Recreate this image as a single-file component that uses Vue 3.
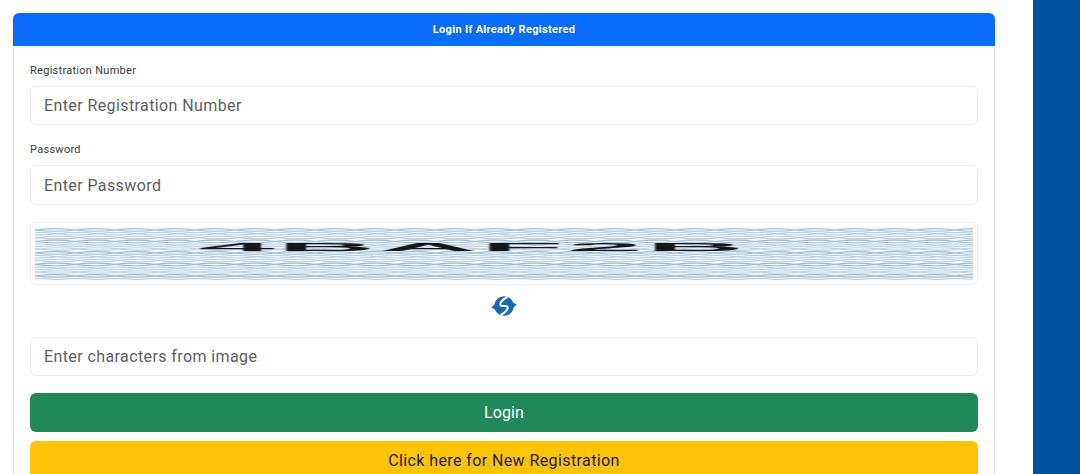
<script setup>
const rows = []
for (let i = 0; i < 14; i++) {
  const y = 3 + i * 3.9
  const up = i % 2 ? 1 : -1
  const start = -80 + (i % 3) * 22
  let a = `M${start} ${y}`
  let b = `M${start} ${y}`
  for (let x = start; x < 960; x += 80) {
    a += ` q20 ${up * 2.6} 40 0 t40 0`
    b += ` q20 ${-up * 2.6} 40 0 t40 0`
  }
  rows.push({ a, b, color: i % 3 === 0 ? '#a3bfd4' : i % 3 === 1 ? '#b4d0e6' : '#bfd1df' })
}
</script>

<template>
  <div class="page">
    <main class="main">
      <section class="card">
        <header class="card-header">Login If Already Registered</header>
        <form class="card-body" @submit.prevent>
          <label class="field-label" for="reg">Registration Number</label>
          <input id="reg" class="control control-reg" placeholder="Enter Registration Number" />

          <label class="field-label" for="pass">Password</label>
          <input id="pass" class="control control-pass" placeholder="Enter Password" />

          <div class="captcha">
            <svg class="captcha-lines" viewBox="0 0 938 54" preserveAspectRatio="none" aria-hidden="true">
              <rect width="938" height="54" fill="#f2f8fd" />
              <g v-for="(r, i) in rows" :key="i" :stroke="r.color" stroke-width="1.1" fill="none">
                <path :d="r.a" />
                <path :d="r.b" />
              </g>
            </svg>
            <span class="captcha-text">4BAF2B</span>
          </div>

          <div class="refresh">
            <svg width="26" height="24" viewBox="0 0 26 24" aria-hidden="true">
              <circle cx="13" cy="12" r="9.8" fill="#1a69b4" />
              <path d="M0.4 13.6 L6.5 7.5 L7.5 17.5 Z" fill="#1a69b4" />
              <path d="M25.6 10.4 L19.5 16.5 L18.5 6.5 Z" fill="#1a69b4" />
              <path d="M16.4 3 C12 5.4 9.4 8 9.2 10.4 C9 12 11 12 13 12 C15 12 17 12 16.8 13.6 C16.6 16 14 18.6 9.6 21" fill="none" stroke="#fff" stroke-width="2" />
            </svg>
          </div>

          <input class="control control-captcha" placeholder="Enter characters from image" />

          <button class="btn btn-login" type="submit">Login</button>
          <button class="btn btn-new" type="button">Click here for New Registration</button>
        </form>
      </section>
    </main>
    <aside class="side"></aside>
  </div>
</template>

<style scoped>
.page {
  display: flex;
  height: 474px;
  overflow: hidden;
  background: #fff;
  font-family: Roboto, "Liberation Sans", sans-serif;
}
.main {
  flex: 0 0 1033px;
  padding: 13px 38px 0 13px;
  box-sizing: border-box;
}
.side {
  flex: 1;
  background: #01549b;
}
.card {
  border: 1px solid #e2e3e5;
  border-radius: 6px;
  height: 520px;
  box-sizing: border-box;
}
.card-header {
  margin: -1px -1px 0;
  height: 33px;
  background: #0a6cfb;
  border-radius: 6px 6px 0 0;
  color: #fff;
  font-size: 11px;
  font-weight: 700;
  letter-spacing: 0.3px;
  line-height: 33px;
  text-align: center;
}
.card-body {
  display: flex;
  flex-direction: column;
  padding: 0 16px;
}
.field-label {
  margin-top: 18px;
  height: 14px;
  margin-bottom: 8px;
  font-size: 11px;
  line-height: 14px;
  color: #3a3e42;
  letter-spacing: 0.28px;
}
.control {
  display: block;
  box-sizing: border-box;
  width: 100%;
  padding: 0 13px;
  border: 1px solid #eaecee;
  border-radius: 6px;
  background: #fff;
  font-family: inherit;
  font-size: 16px;
  letter-spacing: 0.4px;
  outline: none;
}
.control::placeholder {
  color: #5c6064;
  opacity: 1;
}
.control-reg { height: 39px; }
.control-pass { height: 40px; }
.control-captcha { height: 39px; }
.captcha {
  position: relative;
  height: 63px;
  margin-top: 17px;
  padding: 4px;
  box-sizing: border-box;
  border: 1px solid #eff0f2;
  border-radius: 6px;
}
.captcha-lines {
  display: block;
  width: 100%;
  height: 53px;
}
.captcha-text {
  position: absolute;
  left: 0;
  right: 62px;
  top: 1px;
  text-align: center;
  font-family: "Liberation Sans", sans-serif;
  font-size: 44px;
  font-weight: 700;
  line-height: 46px;
  color: #15151a;
  transform: scale(3.1, 0.24);
  letter-spacing: 1px;
  filter: blur(0.4px);
}
.refresh {
  display: flex;
  justify-content: center;
  align-items: center;
  height: 42px;
  margin-bottom: 10px;
}
.btn {
  display: block;
  width: 100%;
  box-sizing: border-box;
  border: none;
  border-radius: 6px;
  font-family: inherit;
  font-size: 16px;
  text-align: center;
}
.btn-login {
  height: 39px;
  margin-top: 17px;
  background: #20895b;
  color: #fff;
  letter-spacing: 0.1px;
}
.btn-new {
  height: 38px;
  margin-top: 9px;
  background: #ffc408;
  color: #1c1c1c;
  letter-spacing: 0.4px;
}
</style>

<style>
html, body { margin: 0; background: #fff; }
</style>
